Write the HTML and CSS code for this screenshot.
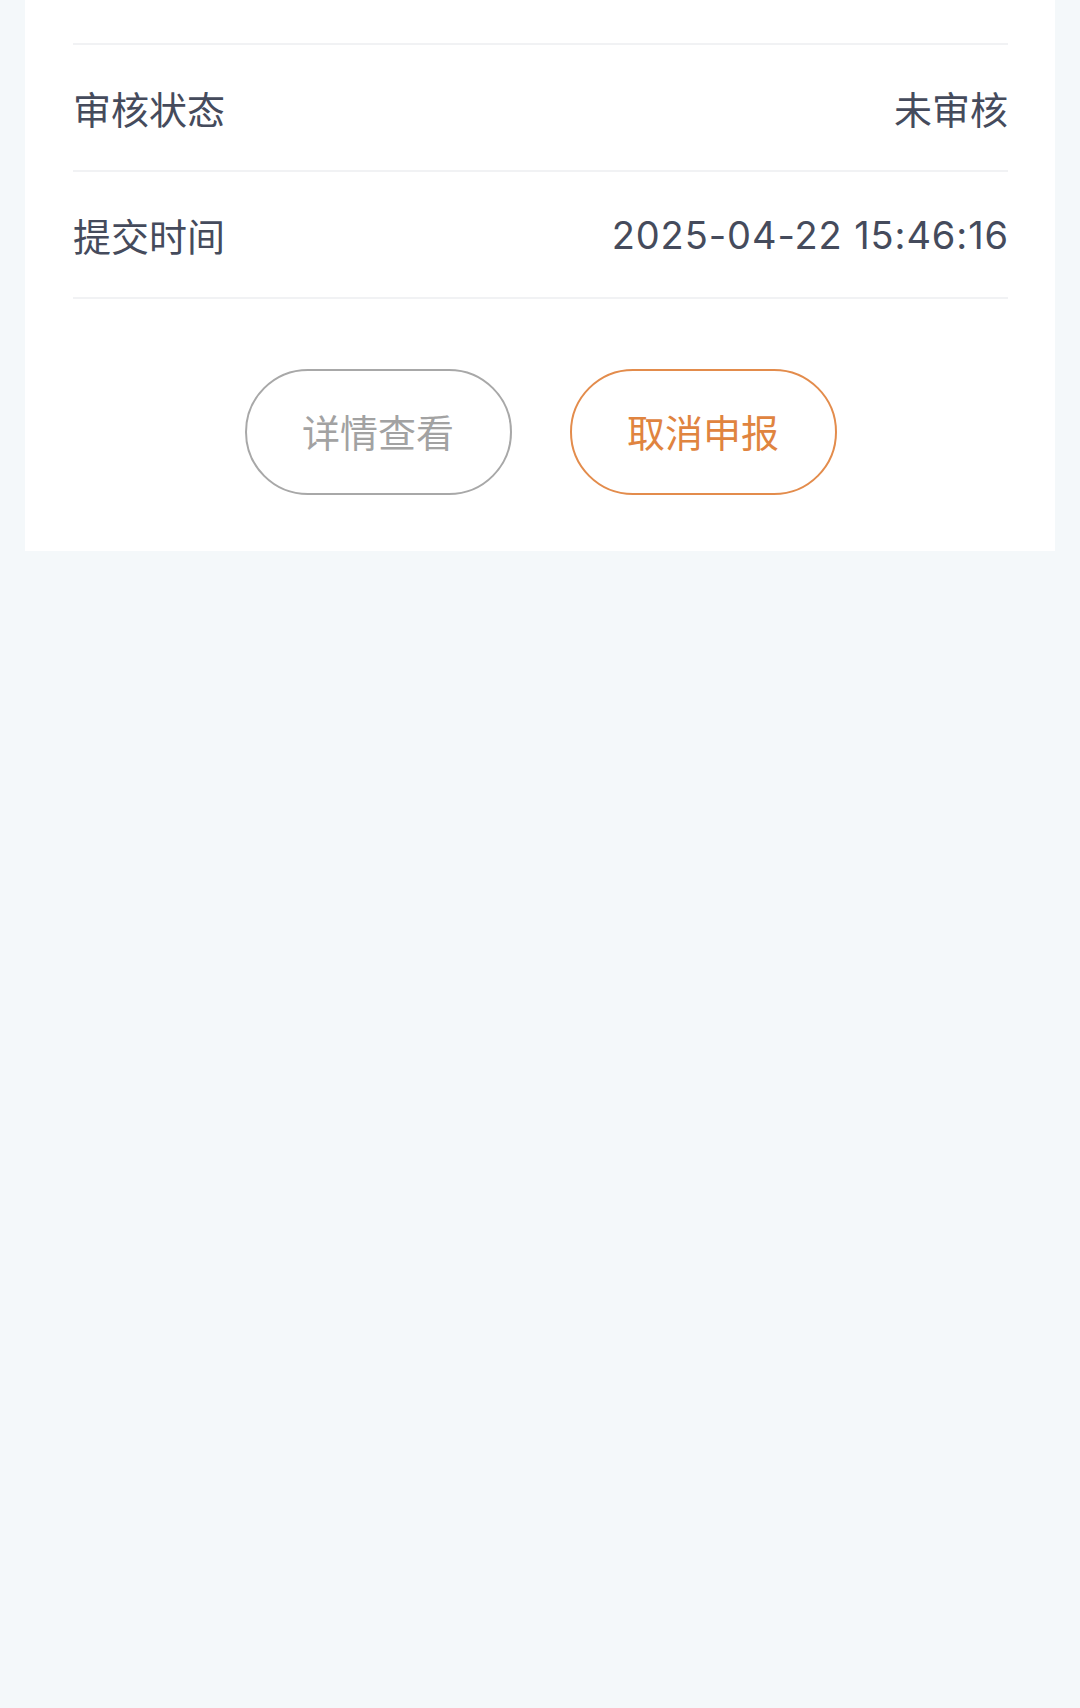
FILE: index.html
```html
<!DOCTYPE html>
<html lang="zh-CN">
<head>
<meta charset="utf-8">
<title>申报详情</title>
<link rel="stylesheet" href="styles.css">
</head>
<body>
  <div class="card">
    <div class="rows">
      <div class="row">
        <span class="label">审核状态</span>
        <span class="value">未审核</span>
      </div>
      <div class="row">
        <span class="label">提交时间</span>
        <span class="value value-time">2025-04-22 15:46:16</span>
      </div>
    </div>
    <div class="actions">
      <button class="btn btn-grey" type="button">详情查看</button>
      <button class="btn btn-orange" type="button">取消申报</button>
    </div>
  </div>
</body>
</html>
```

FILE: styles.css
```css
html, body {
  margin: 0;
  padding: 0;
}
body {
  width: 1080px;
  height: 1708px;
  background: #f4f8fa;
  font-family: "Inter", "Noto Sans CJK SC", "Noto Sans", sans-serif;
  overflow: hidden;
}
.card {
  margin: 0 25px;
  background: #ffffff;
  padding: 43px 47px 0 48px;
  height: 508px;
  box-sizing: content-box;
}
.rows {
  border-bottom: 2px solid #f1f2f4;
}
.row {
  display: flex;
  justify-content: space-between;
  align-items: center;
  height: 125px;
  border-top: 2px solid #f1f2f4;
  color: #454b5c;
  font-size: 38px;
}
.value-time {
  letter-spacing: 0.9px;
  margin-right: -1px;
}
.actions {
  display: flex;
  justify-content: center;
  gap: 58px;
  padding-top: 70px;
}
.btn {
  width: 267px;
  height: 126px;
  border-radius: 63px;
  background: #ffffff;
  font-family: "Noto Sans CJK SC", "Noto Sans", sans-serif;
  font-size: 38px;
  padding: 0 0 3px;
  box-sizing: border-box;
}
.btn-grey {
  border: 2px solid #a8a8a8;
  color: #a2a2a2;
}
.btn-orange {
  border: 2px solid #e38c4c;
  color: #e0843f;
}
```
